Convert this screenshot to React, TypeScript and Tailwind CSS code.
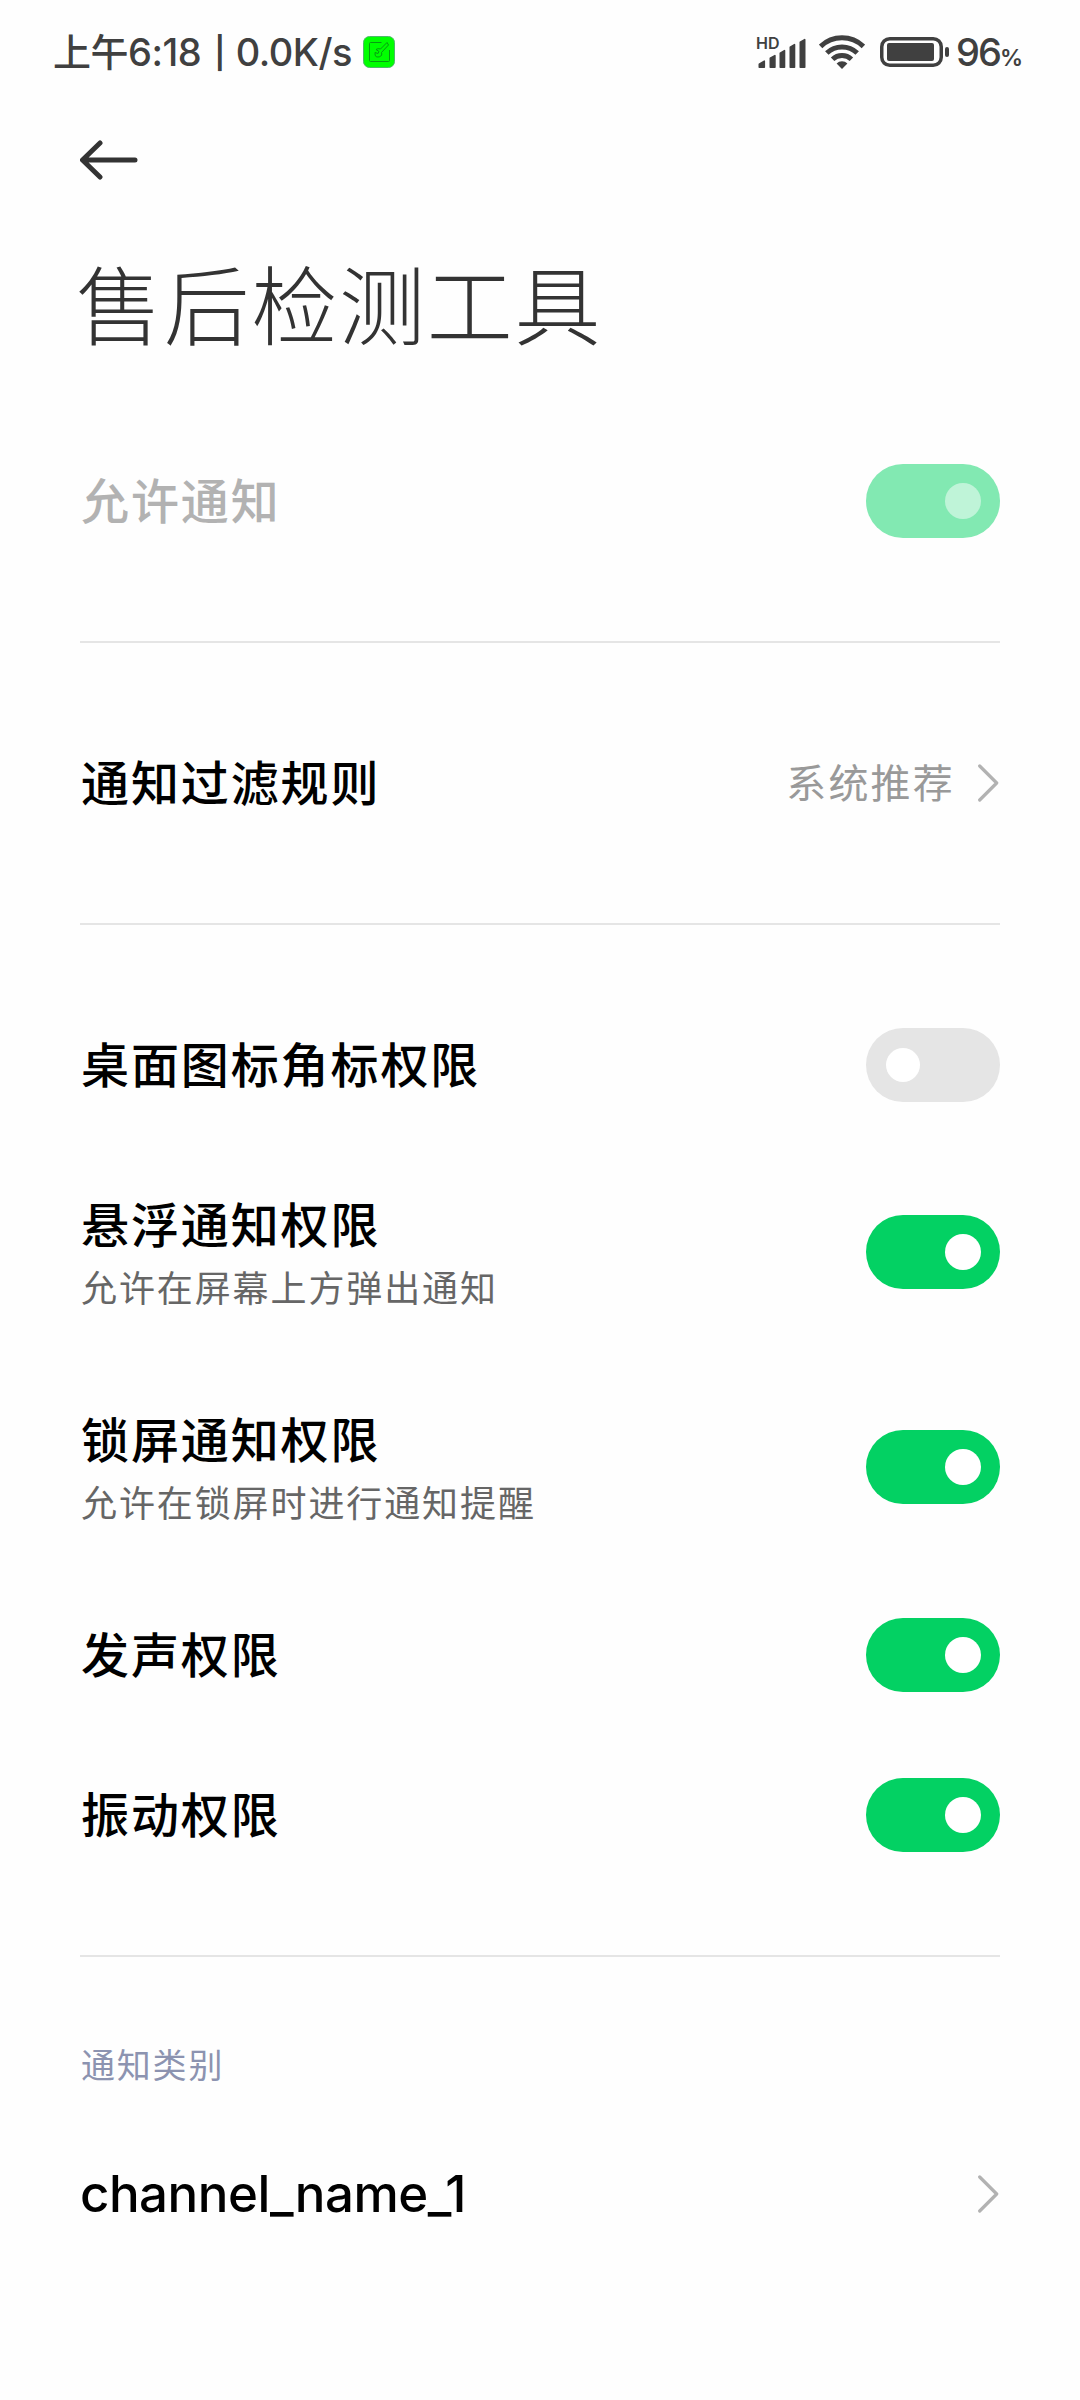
import { ReactNode } from 'react'
import clsx from 'clsx'

interface Permission {
  title: string
  summary?: string
  on: boolean
}

const PERMISSIONS: Permission[] = [
  { title: '桌面图标角标权限', on: false },
  { title: '悬浮通知权限', summary: '允许在屏幕上方弹出通知', on: true },
  { title: '锁屏通知权限', summary: '允许在锁屏时进行通知提醒', on: true },
  { title: '发声权限', on: true },
  { title: '振动权限', on: true },
]

function SignalIcon() {
  return (
    <span className="relative block h-[34px] w-[52px]">
      <span className="absolute left-0 top-0 text-[16px] font-semibold leading-none">HD</span>
      <svg className="h-[34px] w-[52px]" viewBox="0 0 52 34" fill="currentColor" stroke="currentColor" strokeWidth="1.6" strokeLinejoin="round">
        <path d="M3.3 32.2v-3l5-3v6z" />
        <path d="M14.3 32.2v-9l4.6-2.6v11.6z" />
        <path d="M24.3 32.2v-14l4.2-2.6v16.6z" />
        <path d="M34.3 32.2v-20l4.2-2.6v22.6z" />
        <path d="M44.3 32.2v-25l4.4-2.6v27.6z" />
      </svg>
    </span>
  )
}

function WifiIcon() {
  return (
    <svg className="h-[34px] w-[46px]" viewBox="0 0 46 34" fill="none" stroke="currentColor" strokeWidth="5">
      <path d="M1.6 11.4a31 31 0 0 1 42.8 0" />
      <path d="M7.8 18a22 22 0 0 1 30.4 0" />
      <path d="M13.6 24.3a13.6 13.6 0 0 1 18.8 0" />
      <path d="M17.6 28.6a7.4 7.4 0 0 1 10.8 0L23 34z" fill="currentColor" stroke="none" />
    </svg>
  )
}

function BatteryIcon() {
  return (
    <svg className="h-[30px] w-[70px]" viewBox="0 0 70 30">
      <rect x="1.75" y="1.75" width="59.5" height="26.5" rx="8" fill="none" stroke="currentColor" strokeWidth="3.5" />
      <rect x="7" y="6" width="47" height="18" rx="2" fill="currentColor" />
      <rect x="65" y="10" width="4" height="10" rx="2" fill="currentColor" />
    </svg>
  )
}

function ToolIcon() {
  return (
    <svg className="h-8 w-8" viewBox="0 0 32 32" fill="none">
      <rect x=".5" y=".5" width="31" height="31" rx="6" fill="#00ff00" stroke="#4fb86a" />
      <g stroke="#079a12" strokeWidth="1">
        <path d="M18.500 6.500h-11q-1 0-1 1v17q0 1 1 1h18q1 0 1-1V14" />
        <path d="M24 6.500l-6.500 6.500q-2.500-1-4.500.5l3 2-1 2-3-1q-.5 3 1.500 4.500 3 .5 5-1.500.5-1.500 0-3l7-7.500z" />
      </g>
    </svg>
  )
}

function Chevron() {
  return (
    <svg className="h-[38px] w-[22px]" viewBox="0 0 22 38" fill="none" stroke="#b2b2b2" strokeWidth="3.2" strokeLinecap="round" strokeLinejoin="round">
      <path d="M1.700 2l17 17-17 17" />
    </svg>
  )
}

function Toggle({ on, disabled }: { on: boolean; disabled?: boolean }) {
  return (
    <span
      className={clsx(
        'flex h-[74px] w-[134px] shrink-0 items-center rounded-full',
        on ? 'justify-end pr-[19px]' : 'justify-start pl-5',
        disabled ? 'bg-[#82e9b2]' : on ? 'bg-[#03d163]' : 'bg-[#e5e5e5]',
      )}
    >
      <span className={clsx('rounded-full', on ? 'size-9' : 'size-[34px]', disabled ? 'bg-[#bff4d8]' : 'bg-white')} />
    </span>
  )
}

interface RowProps {
  title: string
  summary?: string
  muted?: boolean
  latin?: boolean
  children: ReactNode
}

function Row({ title, summary, muted, latin, children }: RowProps) {
  return (
    <div className={clsx('flex items-center justify-between', summary ? 'mb-px h-[214px]' : 'h-40')}>
      <div className={clsx('flex flex-col', !latin && 'pl-px', summary ? 'pt-2.5' : !latin && 'pt-0.5')}>
        <span
          className={clsx(
            'font-medium leading-[64px]',
            latin ? 'text-[51px] tracking-[-0.5px]' : 'text-[48px] tracking-[1.900px]',
            muted ? 'text-[#b2b2b2]' : 'text-black',
          )}
        >
          {title}
        </span>
        {summary && <span className="text-[36px] leading-[62px] tracking-[1.9px] text-[#666]">{summary}</span>}
      </div>
      {children}
    </div>
  )
}

function Divider() {
  return <div className="my-[60px] h-0.5 bg-[#e5e5e5]" />
}

export default function App() {
  return (
    <div lang="zh-CN" className="h-[2400px] w-[1080px] overflow-hidden bg-[#fefefe] font-[Inter,'Noto_Sans_CJK_SC',sans-serif]">
      <header className="flex h-[104px] items-center justify-between pl-[53px] pr-[58px] text-[#404040]">
        <div className="flex items-center">
          <span className="flex w-[302px] items-center whitespace-pre text-[38px] font-medium leading-none tracking-[-0.5px]">
            上午6:18<span className="ml-[13px] mr-[11px] text-[31px] font-semibold leading-none">|</span>0.0K/s
          </span>
          <span className="ml-2">
            <ToolIcon />
          </span>
        </div>
        <div className="flex items-center">
          <SignalIcon />
          <span className="ml-[11px]">
            <WifiIcon />
          </span>
          <span className="ml-[15px]">
            <BatteryIcon />
          </span>
          <span className="ml-[6px] w-[66px] whitespace-nowrap text-[38px] font-medium leading-none tracking-[-2px]">
            96<span className="text-[23px] font-semibold">%</span>
          </span>
        </div>
      </header>

      <main className="px-20">
        <div className="flex h-28 items-center">
          <svg className="h-10 w-[60px]" viewBox="0 0 60 40" fill="none" stroke="#333" strokeWidth="5" strokeLinecap="round" strokeLinejoin="round">
            <path d="M20 3L2.500 20 20 37M3 20h52" />
          </svg>
        </div>
        <h1 className="-ml-[4px] flex h-[205px] items-center pb-[21px] text-[86px] font-light leading-none tracking-[1.700px] text-[#333]">
          售后检测工具
        </h1>

        <Row title="允许通知" muted>
          <Toggle on disabled />
        </Row>
        <Divider />
        <Row title="通知过滤规则">
          <span className="flex items-center gap-[23px] text-[40px] tracking-[2.2px] text-[#999]">
            <span className="pt-0.5">系统推荐</span>
            <Chevron />
          </span>
        </Row>
        <Divider />
        {PERMISSIONS.map((p) => (
          <Row key={p.title} title={p.title} summary={p.summary}>
            <Toggle on={p.on} />
          </Row>
        ))}
        <Divider />
        <h2 className="flex h-[97px] items-center pl-px text-[34px] leading-none tracking-[1.800px] text-[#8c93b0]">通知类别</h2>
        <Row title="channel_name_1" latin>
          <Chevron />
        </Row>
      </main>
    </div>
  )
}
